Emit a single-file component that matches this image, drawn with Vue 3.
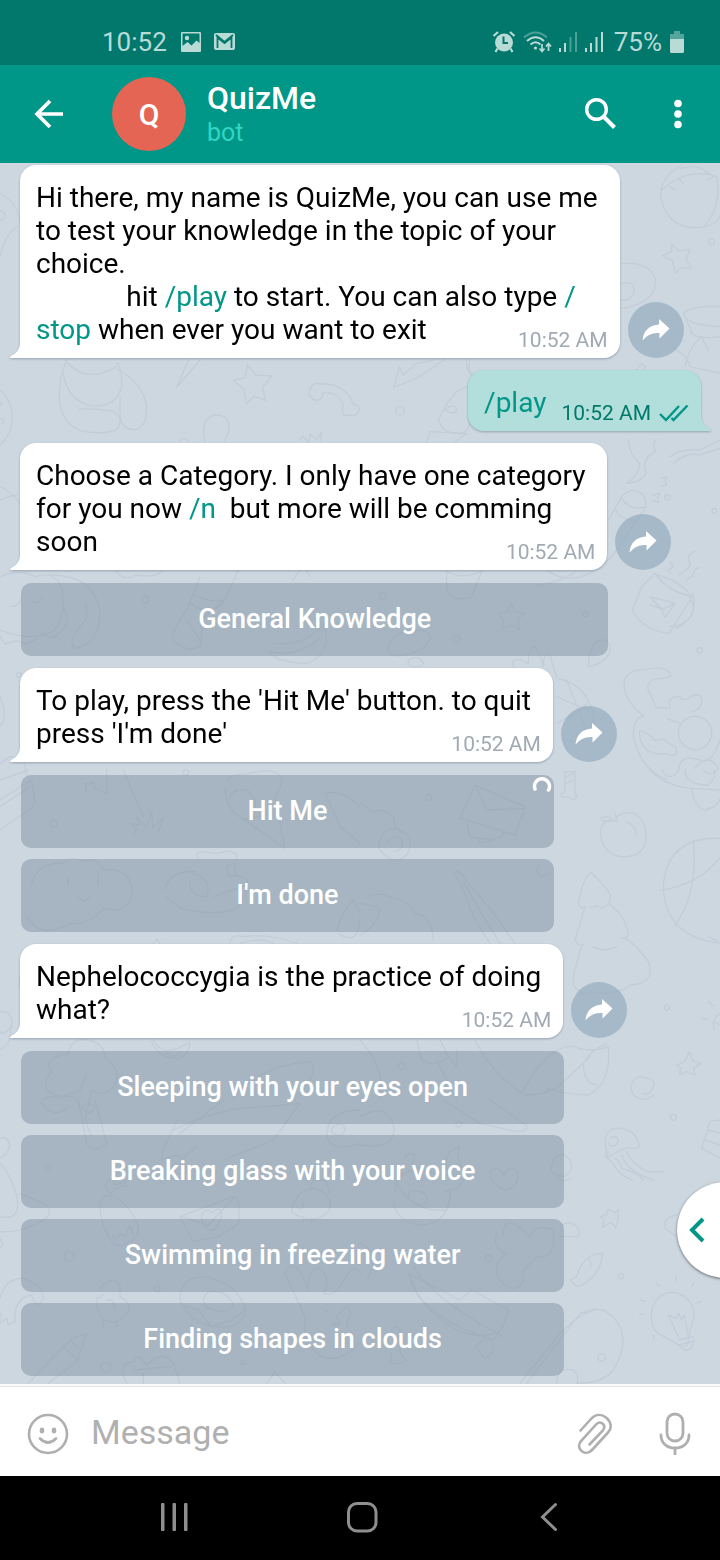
<script setup>
import { ref } from 'vue'

const draft = ref('')

// Each message is a list of lines; each line is a list of text runs.
const messages = [
  {
    lines: [
      [{ t: 'Hi there, my name is QuizMe, you can use me' }],
      [{ t: 'to test your knowledge in the topic of your' }],
      [{ t: 'choice.' }],
      [
        { t: '             hit ' },
        { t: '/play', link: true },
        { t: ' to start. You can also type ' },
        { t: '/', link: true },
      ],
      [{ t: 'stop', link: true }, { t: ' when ever you want to exit' }],
    ],
    time: '10:52 AM',
  },
  { outgoing: true, lines: [[{ t: '/play', link: true }]], time: '10:52 AM' },
  {
    lines: [
      [{ t: 'Choose a Category. I only have one category' }],
      [{ t: 'for you now ' }, { t: '/n', link: true }, { t: '  but more will be comming' }],
      [{ t: 'soon' }],
    ],
    time: '10:52 AM',
    buttons: [{ label: 'General Knowledge' }],
  },
  {
    lines: [[{ t: "To play, press the 'Hit Me' button. to quit" }], [{ t: "press 'I'm done'" }]],
    time: '10:52 AM',
    buttons: [{ label: 'Hit Me', loading: true }, { label: "I'm done" }],
  },
  {
    lines: [[{ t: 'Nephelococcygia is the practice of doing' }], [{ t: 'what?' }]],
    time: '10:52 AM',
    buttons: [
      { label: 'Sleeping with your eyes open' },
      { label: 'Breaking glass with your voice' },
      { label: 'Swimming in freezing water' },
      { label: 'Finding shapes in clouds' },
    ],
  },
]
</script>

<template>
  <div class="screen">
    <div class="status">
      <span>10:52</span>
      <svg class="s-image" width="22" height="22" viewBox="0 0 22 22">
        <path fill-rule="evenodd" fill="currentColor" d="M2 1h18a1 1 0 0 1 1 1v18a1 1 0 0 1-1 1H2a1 1 0 0 1-1-1V2a1 1 0 0 1 1-1ZM2.500 2.500V15l5-4 4 3.500 5-5 3 2.500V2.500Z" />
        <circle cx="7" cy="7" r="2.200" fill="currentColor" />
      </svg>
      <svg class="s-mail" width="22" height="22" viewBox="0 0 22 22">
        <rect x="1" y="2" width="21" height="17" rx="2" fill="currentColor" />
        <path d="M4.500 17V6.500L11.500 12l7-5.500V17M3 4l8.500 7L20 4" fill="none" stroke="#02786d" stroke-width="1.800" />
      </svg>
      <span class="grow"></span>
      <svg width="24" height="22" viewBox="0 0 24 22">
        <circle cx="12" cy="11.500" r="9" fill="currentColor" />
        <path d="M1.500 5 6 1M22.500 5 18 1M5.500 17.500 3.500 21M18.500 17.500l2 3.500" stroke="currentColor" stroke-width="2.200" fill="none" />
        <path d="M11.500 5.500V12H16" stroke="#02786d" stroke-width="2" fill="none" />
      </svg>
      <svg class="s-wifi" width="29" height="22" viewBox="0 0 29 22" fill="none" stroke="currentColor" stroke-width="2">
        <path d="M1 6.500Q12.500-3.500 24 6.500" opacity=".4" />
        <path d="M4 10q8.500-7.500 17 0M7.500 13.500q5-4.500 10 0" />
        <circle cx="12.500" cy="17" r="1.600" fill="currentColor" stroke="none" />
        <path d="M19 13v7M16.500 17.500l2.500 3 2.500-3M25.500 20v-7M23 15.500l2.500-3 2.500 3" stroke-width="1.700" />
      </svg>
      <svg class="s-signal" width="20" height="22" viewBox="0 0 20 22" fill="currentColor">
        <rect x="1" y="17" width="2" height="4" /><rect x="6" y="12" width="2" height="9" />
        <rect x="11.500" y="6" width="2" height="15" opacity=".4" /><rect x="17" y="1" width="2" height="20" opacity=".4" />
      </svg>
      <svg class="s-signal" width="20" height="22" viewBox="0 0 20 22" fill="currentColor">
        <rect x="1" y="17" width="2" height="4" /><rect x="6" y="12" width="2" height="9" />
        <rect x="11.500" y="6" width="2" height="15" /><rect x="17" y="1" width="2" height="20" />
      </svg>
      <span class="percent">75%</span>
      <svg width="14" height="22" viewBox="0 0 14 22" fill="currentColor">
        <path d="M4 0h6v3h4v5H0V3h4Z" opacity=".45" /><path d="M0 8h14v12.500a1.500 1.500 0 0 1-1.500 1.500h-11A1.500 1.500 0 0 1 0 20.500Z" />
      </svg>
    </div>

    <header class="bar">
      <button class="icon back" aria-label="Back">
        <svg width="30" height="30" viewBox="0 0 30 30" fill="none" stroke="currentColor" stroke-width="3.700"><path d="M29 15H4M16 2 3 15l13 13" /></svg>
      </button>
      <div class="avatar">Q</div>
      <div class="who"><h1>QuizMe</h1><p>bot</p></div>
      <button class="icon" aria-label="Search">
        <svg width="32" height="32" viewBox="0 0 32 32" fill="none" stroke="currentColor"><circle cx="12.500" cy="11.500" r="9.800" stroke-width="3.400" /><path d="m20 19 10.500 10.500" stroke-width="4" /></svg>
      </button>
      <button class="icon more" aria-label="More options">
        <svg width="8" height="30" viewBox="0 0 8 30" fill="currentColor"><circle cx="4" cy="4.500" r="3.800" /><circle cx="4" cy="15" r="3.800" /><circle cx="4" cy="25.500" r="3.800" /></svg>
      </button>
    </header>

    <main class="chat">
      <svg class="doodles" viewBox="0 163 720 1221" preserveAspectRatio="xMidYMid slice" aria-hidden="true">
        <g transform="translate(0 160) scale(.33333)">
          <path d="M0 100Q55 130 62 190M0 152a16 14 0 0 1 0 28M50 200Q10 230 0 290M0 690q35 30 37 80t-37 85M0 725q12 5 0 12M0 775q18 5 8 15" />
          <path d="M200 600q-25 60-22 120 10 80 75 95 70 10 100-10 20-35-15-52-50-8-100-6M190 640q10 80 85 98 75 5 90-60 5-45-15-70M195 600q60 75 155 20M355 630q75 40 85 110 0 60-30 68-50 5-50-50V710M565 600 530 682 600 600" />
          <path d="m742 615 25 30 48 3-28 35 10 38-35-12-22 22-10-45-30-25 35-8ZM930 690q5-25 35-18 70-2 95 60 25 5 15 25-10 15-30 8-25 5-15-30-15-40-60-38-5 30-28 22-20-10-12-29M615 845q-15-70 30-80 45-2 42 45l-15 40M540 845q10-20 25 0M900 840l10-12 15 20 5-25 20 15 15-22-5 28" />
        </g>
        <g transform="translate(360 160) scale(.33333)">
          <path d="M965 15q-70 40-62 100 20 90 110 88 60-5 70-40M905 90q80-70 165-40 15 90-35 145M960 25q60-15 80 15M955 55l15 15M930 80l15 10M1040 35l20 15-20 10M935 253l22 20 33-5-12 30 16 25-32 2-15 15-10-38-30-15 28-12ZM785 310q85-5 102 50 0 60-75 80-30 10-40 0M785 370q40-10 37 25-10 30-40 25M970 460q30-25 110-20M970 460q5 35 110 40M970 460l30 65M1080 530q-70 10-90-15M930 560q50 20 60 60l90 20M975 620q10-60 50-90l20 40" />
          <circle cx="1055" cy="245" r="9" /><circle cx="120" cy="752" r="13" />
          <path d="m220 600-50 10-40 35-12-25-17 62 65-25 90-60M330 600q-20 60 60 40M320 600q-5 30 20 50M240 770q20-45 50-75l40-20M235 775q10 50 70 45 30-15 25-50M195 865l15-50 110 5-70 50M255 750q20-20 35-5 0 25-35 5M820 640l25-30 12 10-20 30" />
        </g>
        <g transform="translate(360 440) scale(.33333)">
          <path d="M805 0q5 50 35 70-5 40-40 60 40 0 58-30-15-50 30-65-15-20 0-35M930 50q30-25 90-20l60-30M940 70q40-35 80-25l60-20M905 115l15-5-5 12 5 12-15 5M880 165l20-5-8 12 5 15-20-5M745 240l40-70q25-30 60-10 25 30 0 60l-90 130q-100 100-190 45 10-30 80-50M785 175q25 40 75 25M765 205q15 40 70 35M530 437q70-10 115-40M260 390v60q20 40 75 20l30-75M260 395q50 25 105-2M885 400l-40 40-28 70q30 60 110 70l70-110q-80-20-112-70M890 405q70 15 105 65-70-15-105-65M990 475q30 50-30 80l-30 5M998 460q20 70-50 105M870 470l75 20-30 42-10-25ZM870 470l35 40 40-20M870 495l35 10M930 365l10 15-15 10 5 10M1005 335q-30 10-15 35 0 20-35 35M1018 382q-20 5-15 20l-25 20" />
          <circle cx="1063" cy="212" r="7" /><circle cx="922" cy="172" r="8" /><circle cx="1019" cy="631" r="8" /><circle cx="68" cy="468" r="10" /><circle cx="289" cy="598" r="10" /><circle cx="676" cy="523" r="8" />
          <path d="m455 490 10 25 30 5-22 18 5 30-25-13-25 12 2-30-15-17 28-6ZM85 620q15-45 75-50 60 0 50 30-20 40-100 48-30-5-25-28M145 660q30-20 45 10-15 20-45 5ZM465 685q-20-30 20-25l20 10q0-50 20-50 20 30 25 60 0-45 20-35 10 40 20 65M590 715q90 15 110 110 0 50-50 60M590 770l95 40M590 850q80-40 90-60M620 720l60 150M685 680q0-70 40-80 30 0 25 35-15 35-65 45M930 700q-20-25-70-12-65 0-68 45 0 50 60 95-30 0-32 60 20 100 100 130M930 700q10 10-20 15-55 0-45 35l25 55q10-5 40 0-10-40 30-35 10 20 40-5 30-5 25 25-5 20-30 25M920 835l40 15M838 872q0 75 80 70 40 15 30-20l-40-25q-30 10-30-5-30-20-40-20M1080 900q-30 80-60 60-60-20-65 30-25 40-50 0M1005 985q40-50 70 0-20 30-45 5" /><circle cx="1005" cy="879" r="50" />
        </g>
        <g transform="translate(0 440) scale(.33333)">
          <path d="M0 140q30 10 60 50M0 180q20-10 50-15M0 410q60-25 105 0 60-20 80 35 15 80-20 125-60 40-165 0M150 405q140 0 150 120-5 90-75 100-25-20 20-70 25-25 10-65M190 505q30 45-20 80-20 20-45-10M0 590l15 22 35-10 30 10 30-15M35 500q20 0 30-25M95 485q20 10 30-10M600 410l-40 100q-50 70-40 90 40 40 80 20 10-40 0-80l75-60 40-90M580 460q40 30 90 20M570 490q60 40 100 0M560 540l40 60M820 610q100 10 150-60 30 90-50 120-100-5-110-35 80 20 150-40M880 420q30-60 50-10M350 395q20 30 60 10 60 10 80-15M0 770q25 60 0 90M0 970l30-20 40 5 10 50" />
          <circle cx="436" cy="479" r="10" /><circle cx="57" cy="705" r="7" /><circle cx="558" cy="998" r="8" />
        </g>
        <g transform="translate(0 770) scale(.33333)">
          <path d="M0 30l85-30M0 90l95-60 10 70M0 110l90-60M0 180l100-70M370 0l60 140M400 195l10-20-20-15 30 5-10-25 30 30 15-45 3 48 32-30-15 40M255 70l5-20-10-10 20 2 10-10 5 20 35 20V0M680 30q20-20 70-20 80-20 95 15 0 30-20 60l30 150-120-85q-60-30-60-100M690 80q10-25 50-20 40 30 20 60M730 150l90-20M975 70q50-15 105 40M975 70q20 40 45 100l60 50" />
          <path d="M95 345q15-70 95-65 20-25 60-5 40-20 60 25 80-10 88 65-10 70-88 50-40 50-100 45-90 50-130-20M205 320v25M295 310v35M230 375q20 35 40 0M495 360q10-60 95-55M500 380l40 35M530 410q90 30 170 10 40-20 40-90M595 265q-15-20 20-20 30 10 60 0 40-5 35 25M570 330q-5 50 50 50 20-50-40-70M680 290l25-10v35l-20 5ZM700 315q50 5 40 30l-100 35M1010 480q20-60 50-90l20 40M1015 490q60 40 65-40" />
          <path d="M690 520q0-30 45-20 80-10 155 20M720 520q60-20 100 0M460 520l10-12 10 12M0 725q40-5 35 45-30 30-35 15M30 770q10 50-30 70M60 620l-5 35M205 850q10-50 60-40 50 10 50 55 50 30 30 80-30 40-70 15l-20 90 20 50M205 850q-80 15-50 55-50 60 35 75l50-20 20-45M120 1000q20-30 60-15 50-20 60 30M460 810q30 60 110 5M455 815q20 50 80 50 30-10 35-45M500 850l25 8 20-15M700 985q80-100 230-110 30 20-30 100" />
          <circle cx="161" cy="161" r="10" />
        </g>
        <g transform="translate(360 770) scale(.33333)">
          <path d="M0 100l40 25 30-5 30 20 5 30 20 20M60 215q10-50 60-35 50 25 20 75-35 30-65 0-25-20-15-40M80 220q10-20 40-20 20 40-20 45M345 45l150 65-30 85q-60-20-165-50ZM345 45l35 75 115-5M320 155l10 45q100 20 100-15M350 200l10 20 40-10M540 285l-12 15 15 20 28-10M285 305q20-5 35 30l70 80 75 105M285 310l25 50 30 80 50 80M310 335q50 90 110 185M0 400q60 10 60 15-5 50-60 80M25 380q30-15 60 0 60 10 80 50 50 5 55 80M605 80q-5-10 10-15v-60h30v60q10 20-5 25-15-10-35-10M620 20l20-10M620 40l20-12M870 0q50 50 125 55l85 5M995 55q10 60 40 65 40-10 45-35M975 0q0 45 70 45 30-30 15-45" />
          <path d="M770 155q-40-15-50 30 10 80 80 75 70-5 55-90-25-65-85-30M765 130l5 22M722 143q30-10 35 10-30 5-35-10M800 155q25 10 30 40M1080 205q-160-5-170 145 5 150 170 170M1000 210q15 160-55 255M900 362q120-20 180-100M1045 500l30 15M655 400q15-80 38-92 30 25 58 65 0 40-30 40M690 413l25-5M655 400q5 20 20 10l-30 100q10 20 25 15M745 400q50 35 60 90 0 15-20 15M700 530q30 20 70 0M665 530q-30 90-25 115 30 40 50 20 80 15 120-20 80-5 55-70-35-50-70-70" />
          <path d="M170 810l15 60q40 25 80-10l-25-50M230 870l60 120M260 850l30 40V840M345 810q50 100 140 160 80-150 160-140 40 20 100 0 10 110-60 145-60 0-125-20M490 975q90 0 120-40l80-75M675 870q15-25 65-50M670 880q0 60 40 65M0 810q80 90 60 180M950 885l25-10 12-30 13 30 23 5-22 15 3 20-25-10-20 10 3-22ZM880 975q-30 25-60 0-20-40 20-55 50 5 40 30-10 30-35 20M1045 693l15 15M1025 745l15 3M1080 730q-30 20-15 50M1060 755l20 10" />
          <circle cx="206" cy="82" r="9" /><circle cx="125" cy="888" r="10" /><circle cx="921" cy="712" r="8" />
        </g>
        <g transform="translate(360 1100) scale(.33333)">
          <path d="M0 50q90-50 103 40-5 60-103 45M105 280q0-60 60-70M110 250q50 90 150 80M100 310q20 65 90 65 80-10 80-100M145 290q0-30 50-10 20 30-20 35M135 175q0-20 30-10l-10 30 40 20 70 10q-20-60 15-75l20-10q-15 40 15 75 0 50-60 60M440 272q-60-25-48-60 20-20 40 15 15-35 40-12 10 35-32 57M575 200q5-40 40-35 40 30 0 65-50-5-40-30M590 230q20 20 45 5M250 0l110 70 110 25q50-5 20-25L390 0" /><circle cx="297" cy="73" r="9" /><circle cx="386" cy="475" r="10" /><circle cx="783" cy="529" r="8" /><circle cx="940" cy="52" r="9" /><circle cx="725" cy="772" r="11" />
          <path d="M740 175q-10-15 0-20-20-75 45-70 45 10 50 45l5 5q-10 15-35 8-35 10-65 32M745 155q-10 20 10 30 20 40 60 55M765 175q15 10 20 30 45 10 65 35M785 165q15 50 95 75M800 155q10 30 60 60l50 0M750 115q20-15 25 10-15 25-30 5M720 350l20-5 5-18 20 12 10-10v25l-8 28-15-15-25 15 5-22ZM605 395q-5-30 30-25 30 15 20 40h-55M630 540l20-10q20-70 78-70-5 60-55 90-10 10-20 10-15-10-10-10ZM685 475q15 20 5 25M1080 60l-30 5-25 80 55 30M1045 90l35 10M1035 120l45 15M950 345q-40 5-35 40l35 25" />
          <path d="M895 700q-25-15-20-70 20-65 80-50 70 30 35 110l-5 30q0 25-20 20ZM955 710l-30-65 25 10 5-15 10 20 8-15 12 65M955 720l45-10M955 735l50-12M965 745q25 15 35-15M890 550l8 8M947 530v12M1003 547l-8 12M1025 603l-13 5M840 600l16 4M838 645l10-4M882 705v10M410 400q-15 50 30 60-50 40-20 80 50 50 70 0v-30l40-40q60 10 50-80-55-20-70 20-80-80-80-5M145 520l30 70q130 160 250 100l20-60-110-60-35 30ZM160 500q60 100 270 210M150 540q50 120 250 180l20-30M370 720l-25 20 30 35q30-15 25-45M480 850l120-150q80-80 130-70 100 60 30 180-30 40-110 40M500 850l160-210 50-13M590 850q0-50 50-40 20 20 10 40M0 430q70 30 20 110M95 690q15-20 25 0v70l20 20-20 10H90l5-30" />
        </g>
        <g transform="translate(0 1100) scale(.33333)">
          <path d="M0 115q20-10 30 20-5 25-30 40M0 190q25 20 50 95 15 80-50 65M60 280l80 35q20 25-10 45-70 40-130 35M0 415q15 20 0 30M125 10q40 50 80 10M235 0l25 130q20 35 60 0L285 0M245 20q20-20 40 0-15 35-40 0M485 180q0-40 50-120M485 180q70-30 55 10-80 60-50 60M540 180l50-40M520 90q140-70 280-70L900 10l-80 110-150 60M540 100L670 0M980 110q0-80 100-80M980 110q20 50 100 20M1000 80q30-20 35 10-10 25-35 10-10-10 0-20M300 310q20-50 70 0 60 60 40 100-50 40-70 20-40-50-40-120M320 270q-5-30 15-35l10 20 30-10 5 15q-30-5-45 20ZM340 405q0 35 20-5l15 10 15-35 10 30M540 350l160-60q25 0 15 80l-60 40-75 15ZM545 350l80 25 80-85M610 370q-15-35 15-40l10 10q30-30 30 10l-20 40q-25 5-35-20M880 310q40-70 95-30 40 50-20 75-40 10-80-20ZM930 275q0-50 50-30l10 40M910 310q0 30-20 10M910 350v15M935 355v15" />
          <path d="M0 595q15-60 70-60 60 20 60 60-20 40-35-10-55 10-50 80l-20 10-5-20-20 15v-35M300 565q30-40 60-10v35q60 35-10 75-60 10-60-70l20-10M320 600q20-5 25 25M310 665v15M350 665v15M540 600q0-70 75-70 100 20 122 100-10 60-90 50-80-10-107-80M610 600q10-40 60-20 60 40 0 55-60-5-60-35M555 620l40 10 40 50 60-20 40-30M915 650l-60-130q30-60 70 50 0-80 40-60 30 40 5 70 30 10 50-20 45-80 60-40M915 650q-10 80 50 120 60 20 110-40M1020 640q30-40 30 0l-10 40M970 630q15 0 15 10M1010 650l10 20-25 5M85 850l105-110 45 40-90 70M190 740l30-25 40-15-25 75M215 725l20 20M380 850q-30-60 20-65 10-30 40 10 50-50 80-5l20 60M400 810l110-10M430 850v-30M800 850l25-35 30 35" />
          <circle cx="144" cy="202" r="8" /><circle cx="208" cy="469" r="15" /><circle cx="471" cy="566" r="9" /><circle cx="317" cy="802" r="15" /><circle cx="730" cy="787" r="7" />
        </g>
      </svg>

      <div class="thread">
        <section v-for="(m, i) in messages" :key="i" class="message" :class="{ outgoing: m.outgoing }">
          <div class="bubble">
            <svg class="tail" width="11" height="16" viewBox="0 0 11 16"><path d="M11 0H10C10 7 7 11 1 14Q-1 16 1 16H11Z" fill="currentColor" /></svg>
            <div class="text">
              <p v-for="(line, k) in m.lines" :key="k"><template v-for="(s, j) in line" :key="j"><a v-if="s.link" href="#">{{ s.t }}</a><span v-else>{{ s.t }}</span></template></p>
            </div>
            <div class="meta">
              <time>{{ m.time }}</time>
              <svg v-if="m.outgoing" width="30" height="18" viewBox="0 0 30 18" fill="none" stroke="#009688" stroke-width="2.400"><path d="m1 9 6 6L20 1M12.500 13l2 2L28.500 .5" /></svg>
            </div>
          </div>
          <button v-if="!m.outgoing" class="share" aria-label="Share">
            <svg width="28" height="24" viewBox="0 0 28 24" fill="#fff"><path d="M17 1 27.500 10.500 17.500 20.500V15Q7 14 .5 22.500C1.500 12.500 7 7.500 17 6.500Z" /></svg>
          </button>
          <div v-if="m.buttons" class="keyboard">
            <button v-for="b in m.buttons" :key="b.label">
              {{ b.label }}
              <svg v-if="b.loading" class="spinner" width="20" height="18" viewBox="0 0 20 18" fill="none" stroke="#fff" stroke-width="3.500" stroke-linecap="round"><path d="M3 12A7.500 7.500 0 1 1 16.500 13" /></svg>
            </button>
          </div>
        </section>
      </div>

      <button class="handle" aria-label="Open panel">
        <svg width="16" height="26" viewBox="0 0 16 26" fill="none" stroke="#009688" stroke-width="4"><path d="M14 2 3 13l11 11" /></svg>
      </button>
    </main>

    <form class="composer" @submit.prevent>
      <button type="button" class="icon" aria-label="Emoji">
        <svg width="42" height="42" viewBox="0 0 42 42" fill="none" stroke="currentColor" stroke-width="2.600" stroke-linecap="round"><circle cx="21" cy="21" r="19" /><path d="M13 25.500q8 8 16 0" /><g fill="currentColor" stroke="none"><ellipse cx="15" cy="17.500" rx="2.300" ry="3" /><ellipse cx="27" cy="17.500" rx="2.300" ry="3" /></g></svg>
      </button>
      <input v-model="draft" type="text" placeholder="Message" aria-label="Message" />
      <button type="button" class="icon" aria-label="Attach">
        <svg width="36" height="42" viewBox="0 0 36 42" fill="none" stroke="currentColor" stroke-width="2.600" stroke-linecap="round"><path d="M3.500 17.500 13.500 6.500C18 1.500 24 .5 29 4.500S35.500 15 31 19.500L15.500 36.500C12 40.500 7.500 40.500 4.500 38S1 31 4.500 27.500L19 11.500C21 9 24 9 26 11S27.500 15.500 25.500 18L12.500 31.500" /></svg>
      </button>
      <button type="button" class="icon mic" aria-label="Voice message">
        <svg width="32" height="44" viewBox="0 0 32 44" fill="none" stroke="currentColor" stroke-width="2.800" stroke-linecap="round"><rect x="8" y="2" width="16" height="27" rx="8" /><path d="M2 23C2 31 7.500 36 16 36S30 31 30 23" /><path d="M16 36v7" stroke-linecap="butt" /></svg>
      </button>
    </form>

    <nav class="system">
      <button class="icon" aria-label="Recent apps">
        <svg width="32" height="30" viewBox="0 0 32 30" fill="currentColor"><rect x="3" y="1" width="3.500" height="28" rx="1" /><rect x="14.500" y="1" width="3.500" height="28" rx="1" /><rect x="26" y="1" width="3.500" height="28" rx="1" /></svg>
      </button>
      <button class="icon" aria-label="Home">
        <svg width="32" height="32" viewBox="0 0 32 32" fill="none" stroke="currentColor" stroke-width="3"><rect x="2.500" y="2.500" width="27.500" height="27.500" rx="8.500" /></svg>
      </button>
      <button class="icon" aria-label="Back">
        <svg width="32" height="30" viewBox="0 0 32 30" fill="none" stroke="currentColor" stroke-width="3" stroke-linecap="round"><path d="M22.500 2.500 9.500 15l13 12.500" /></svg>
      </button>
    </nav>
  </div>
</template>

<style>
body {
  margin: 0;
}
</style>

<style scoped>
.screen {
  display: flex;
  flex-direction: column;
  min-height: 100vh;
  overflow: hidden;
  font-family: Roboto, "Noto Sans", sans-serif;
}
svg {
  display: block;
  flex: none;
}
button {
  font: inherit;
  border: 0;
  padding: 0;
  background: none;
  color: inherit;
}
p,
h1 {
  margin: 0;
}
.icon {
  display: grid;
  place-items: center;
}

.status {
  display: flex;
  align-items: center;
  box-sizing: border-box;
  height: 65px;
  padding: 19px 36px 0 102px;
  background: #02786d;
  color: #b8dbd6;
  font-size: 26px;
}
.s-image {
  margin-left: 13px;
}
.s-mail {
  margin-left: 11px;
}
.grow {
  flex: 1;
}
.s-wifi {
  margin: 0 6px 0 7px;
}
.s-signal {
  margin-right: 6px;
}
.percent {
  margin: 0 8px 0 4px;
}

.bar {
  display: flex;
  align-items: center;
  height: 98px;
  padding: 0 38px 0 34px;
  background: #009688;
  color: #fff;
}
.avatar {
  display: grid;
  place-items: center;
  width: 74px;
  height: 74px;
  margin: 0 21px 0 48px;
  border-radius: 50%;
  background: #e56555;
  font-size: 30px;
  font-weight: 500;
}
.who {
  flex: 1;
}
.who h1 {
  font-size: 32px;
  line-height: 38px;
  font-weight: 500;
}
.who p {
  font-size: 25px;
  line-height: 32px;
  color: #2fd6c3;
}
.more {
  margin-left: 58px;
}

.chat {
  position: relative;
  flex: 1;
  overflow: hidden;
  background: #cdd7e0;
}
.doodles {
  position: absolute;
  inset: 0;
  width: 100%;
  height: 100%;
  fill: none;
  stroke: #c3cdd9;
  stroke-width: 4;
  stroke-linecap: round;
  stroke-linejoin: round;
}
.thread {
  position: relative;
  display: flex;
  flex-direction: column;
  gap: 12px;
  padding: 2px 19px 8px 20px;
}
.message {
  display: grid;
  grid-template-columns: auto 56px;
  justify-content: start;
  align-items: end;
  column-gap: 8px;
}
.bubble {
  position: relative;
  display: grid;
  padding: 16px 12px 12px 16px;
  border-radius: 16px 16px 16px 0;
  background: #fff;
  color: #fff;
  filter: drop-shadow(0 1px 1px rgba(90, 110, 130, 0.5));
}
.text {
  grid-area: 1 / 1;
  padding-right: 10px;
  font-size: 28px;
  line-height: 33px;
  color: #000;
}
.text p {
  white-space: pre-wrap;
}
.text a {
  color: #009688;
  text-decoration: none;
}
.meta {
  grid-area: 1 / 1;
  place-self: end;
  display: flex;
  align-items: center;
  gap: 8px;
  margin-bottom: -7px;
  font-size: 21px;
  line-height: 25px;
  color: #a1aab3;
}
.tail {
  position: absolute;
  left: -10px;
  bottom: 0;
}
.outgoing {
  display: flex;
  justify-content: flex-end;
}
.outgoing .bubble {
  display: flex;
  gap: 5px;
  border-radius: 16px 16px 0 16px;
  background: #b2dfdb;
  color: #b2dfdb;
}
.outgoing .meta {
  align-self: flex-end;
  color: #00796b;
}
.outgoing .tail {
  left: auto;
  right: -10px;
  transform: scaleX(-1);
}
.share {
  display: grid;
  place-items: center;
  width: 56px;
  height: 56px;
  border-radius: 50%;
  background: rgba(140, 165, 185, 0.6);
}
.keyboard {
  display: grid;
  gap: 11px;
  margin: 13px -1px 0 1px;
}
.keyboard button {
  position: relative;
  height: 73px;
  padding-bottom: 2px;
  border-radius: 10px;
  background: rgba(120, 139, 155, 0.45);
  color: #fff;
  font-size: 27px;
  font-weight: 500;
}
.spinner {
  position: absolute;
  top: 2px;
  right: 2px;
}
.handle {
  position: absolute;
  right: -53px;
  bottom: 106px;
  display: flex;
  align-items: center;
  width: 96px;
  height: 96px;
  padding-left: 12px;
  border-radius: 50%;
  background: #fff;
  box-shadow: 0 1px 3px rgba(0, 0, 0, 0.5);
}

.composer {
  position: relative;
  display: flex;
  align-items: center;
  height: 89px;
  padding: 0 29px 0 27px;
  border-top: 1px solid #e4e4e4;
  box-shadow: 0 -2px #fafafa;
  margin-top: 2px;
  background: #fff;
  color: #afafaf;
}
.composer .icon {
  margin-top: 4px;
}
.composer input {
  flex: 1;
  min-width: 0;
  margin: 0 20px 0 22px;
  padding: 0;
  border: 0;
  outline: 0;
  background: none;
  font: inherit;
  font-size: 34px;
  line-height: 40px;
  color: #000;
}
.composer input::placeholder {
  color: #b0b0b0;
  opacity: 1;
}
.composer .mic {
  margin-left: 46px;
}

.system {
  display: flex;
  align-items: center;
  justify-content: space-between;
  box-sizing: border-box;
  height: 84px;
  padding: 0 21.5% 2px 22%;
  background: #000;
  color: #8f8f8f;
}
</style>
